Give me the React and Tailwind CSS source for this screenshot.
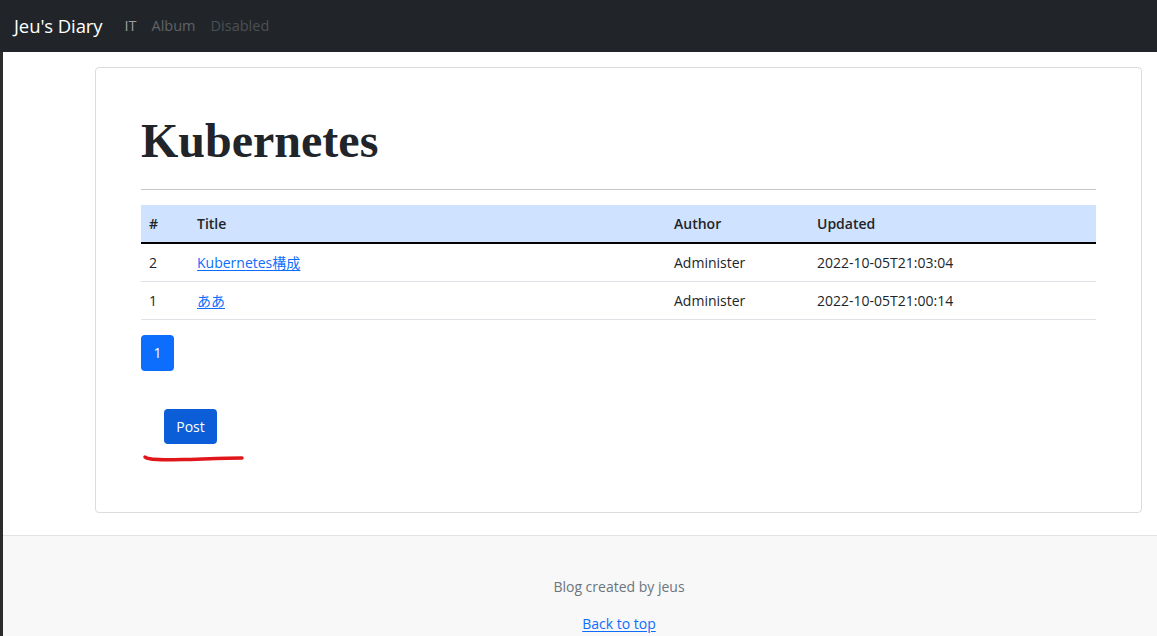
const posts = [
  { id: 2, title: "Kubernetes構成", author: "Administer", updated: "2022-10-05T21:03:04" },
  { id: 1, title: "ああ", author: "Administer", updated: "2022-10-05T21:00:14" },
];

const sans = "font-['Open_Sans','Noto_Sans_CJK_JP',sans-serif]";

function Navbar() {
  return (
    <nav className={`h-[52px] bg-[#212529] flex items-center px-[14px] ${sans}`}>
      <a className="text-white text-[18.5px] tracking-[-0.1px]">Jeu's Diary</a>
      <div className="flex items-center ml-[22px] gap-[15px] text-[14.5px]">
        <a className="text-[#9b9d9f]">IT</a>
        <a className="text-[#5f6367]">Album</a>
        <a className="text-[#4c5054]">Disabled</a>
      </div>
    </nav>
  );
}

function PostTable() {
  return (
    <table className="w-full text-[14px] text-[#212529] border-collapse">
      <thead>
        <tr className="bg-[#cfe2ff] h-[38px] border-b-2 border-black">
          <th className="text-left font-semibold pl-[8px] w-[56px]">#</th>
          <th className="text-left font-semibold">Title</th>
          <th className="text-left font-semibold w-[143px]">Author</th>
          <th className="text-left font-semibold w-[279px]">Updated</th>
        </tr>
      </thead>
      <tbody>
        {posts.map((p) => (
          <tr key={p.id} className="h-[38px] border-b border-[#dee2e6]">
            <td className="pl-[8px]">{p.id}</td>
            <td>
              <a className="text-[#0d6efd] underline underline-offset-2">{p.title}</a>
            </td>
            <td>{p.author}</td>
            <td>{p.updated}</td>
          </tr>
        ))}
      </tbody>
    </table>
  );
}

export default function App() {
  return (
    <div className={`w-[1157px] h-[636px] overflow-hidden bg-white ${sans}`}>
      <Navbar />
      <div className="flex h-[584px]">
        <div className="w-[3px] bg-[#2c2c2c] shrink-0" />
        <div className="flex-1 flex flex-col">
          <main className="pt-[15px] pl-[92px] pr-[15px] pb-[22px]">
            <div className="border border-[#dcdcdc] rounded-[4px] h-[446px] px-[45px] pt-[45px]">
              <h1 className="font-['Liberation_Serif',serif] font-bold text-[48px] leading-[56px] text-[#212529]">
                Kubernetes
              </h1>
              <hr className="mt-[20px] mb-[15px] border-t border-[#c8c8c8]" />
              <PostTable />
              <div className="mt-[15px] flex">
                <a className="w-[33px] h-[36px] rounded-[4px] bg-[#0d6efd] text-white text-[14px] flex items-center justify-center">
                  1
                </a>
              </div>
              <div className="mt-[38px] pl-[23px]">
                <button className="w-[53px] h-[35px] rounded-[4px] bg-[#0b5ed7] text-white text-[14px] flex items-center justify-center">
                  Post
                </button>
              </div>
              <svg width="104" height="10" viewBox="0 0 104 10" className="mt-[9px] ml-[1px] block">
                <path
                  d="M3 4 C 6 7, 20 7, 40 6.5 S 85 5, 100 5"
                  stroke="#e0161b"
                  strokeWidth="3.5"
                  strokeLinecap="round"
                  fill="none"
                />
              </svg>
            </div>
          </main>
          <footer className="flex-1 border-t border-[#e2e2e2] bg-[#f8f8f8] flex flex-col items-center pt-[42px] pl-[78px] text-[14px]">
            <p className="text-[#6c757d] leading-[18px]">Blog created by jeus</p>
            <a className="mt-[19px] text-[#0d6efd] underline underline-offset-2 leading-[18px]">Back to top</a>
          </footer>
        </div>
      </div>
    </div>
  );
}
